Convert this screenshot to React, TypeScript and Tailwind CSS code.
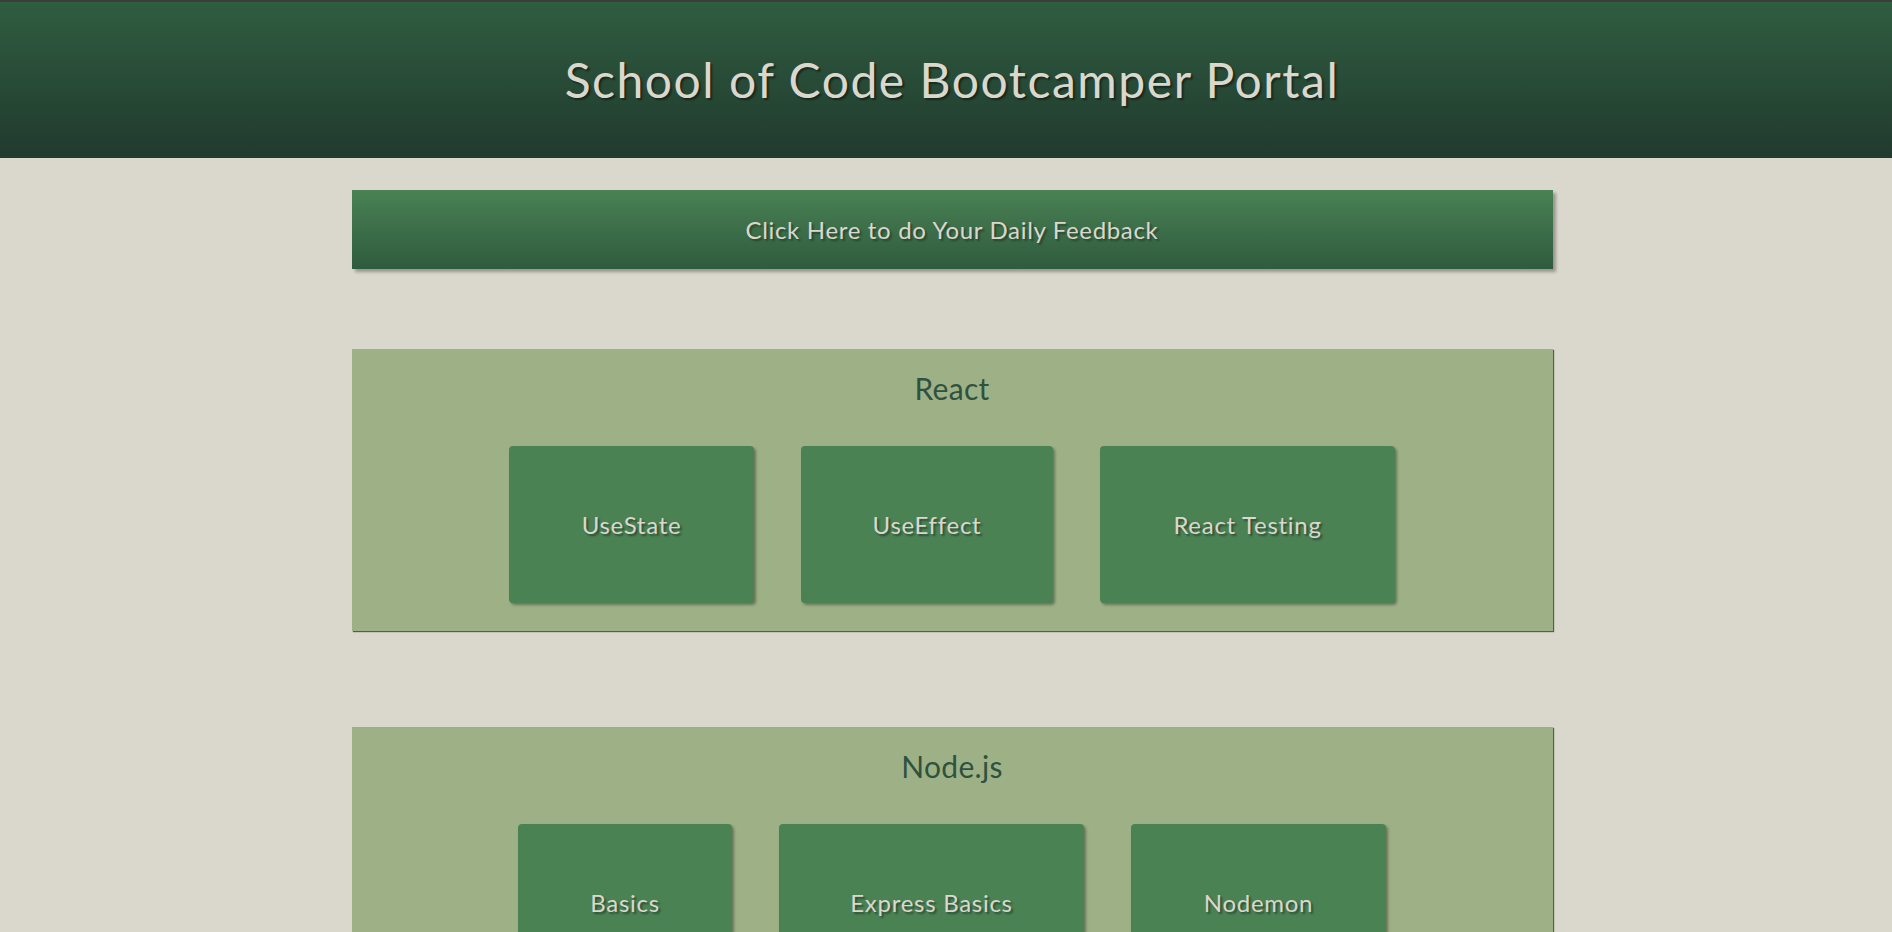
import React from 'react';

const topics = [
  {
    title: 'React',
    cards: [
      { name: 'UseState', width: 'w-[245px]' },
      { name: 'UseEffect', width: 'w-[252px]' },
      { name: 'React Testing', width: 'w-[295px]' },
    ],
  },
  {
    title: 'Node.js',
    cards: [
      { name: 'Basics', width: 'w-[214px]' },
      { name: 'Express Basics', width: 'w-[305px]' },
      { name: 'Nodemon', width: 'w-[255px]' },
    ],
  },
];

export default function App() {
  return (
    <div className="min-h-screen bg-[#dad7cd] font-['Lato','Liberation_Sans',sans-serif] pb-20">
      {/* header */}
      <header className="h-[158px] border-t-2 border-[#3c3c3c] bg-linear-to-b from-[#2f5d40] to-[#213a2e] flex items-center justify-center pl-[12px]">
        <h1 className="text-[48px] leading-[48px] tracking-[0.032em] text-[#dad7cd] [text-shadow:2px_2px_2px_rgba(0,0,0,0.45)]">
          School of Code Bootcamper Portal
        </h1>
      </header>

      <main className="pl-[12px]">
        <div className="w-[1201px] mx-auto">
          <button className="mt-8 w-full h-[79px] flex items-center justify-center bg-linear-to-b from-[#4a8254] to-[#2f5b3e] shadow-[3px_3px_3px_rgba(0,0,0,0.3)] text-[24px] leading-[24px] tracking-[0.028em] text-[#dad7cd] [text-shadow:2px_2px_2px_rgba(0,0,0,0.35)]">
            Click Here to do Your Daily Feedback
          </button>

          {topics.map((t, i) => (
            <section
              key={t.title}
              className={`${i === 0 ? 'mt-20' : 'mt-24'} bg-[#9eb186] shadow-[1px_1px_1px_rgba(52,78,65,0.85)] pt-[21px] pb-[28px]`}
            >
              <h2 className="text-center text-[30px] leading-[36px] tracking-[0.01em] text-[#2e5140]">{t.title}</h2>
              <div className="mt-10 flex justify-center gap-[47px]">
                {t.cards.map(c => (
                  <div
                    key={c.name}
                    className={`${c.width} h-[157px] rounded bg-[#4a8254] shadow-[2px_2px_3px_rgba(0,0,0,0.35)] flex items-center justify-center text-[24px] leading-[24px] tracking-[0.03em] text-[#dad7cd] [text-shadow:2px_2px_2px_rgba(0,0,0,0.4)]`}
                  >
                    {c.name}
                  </div>
                ))}
              </div>
            </section>
          ))}
        </div>
      </main>
    </div>
  );
}
